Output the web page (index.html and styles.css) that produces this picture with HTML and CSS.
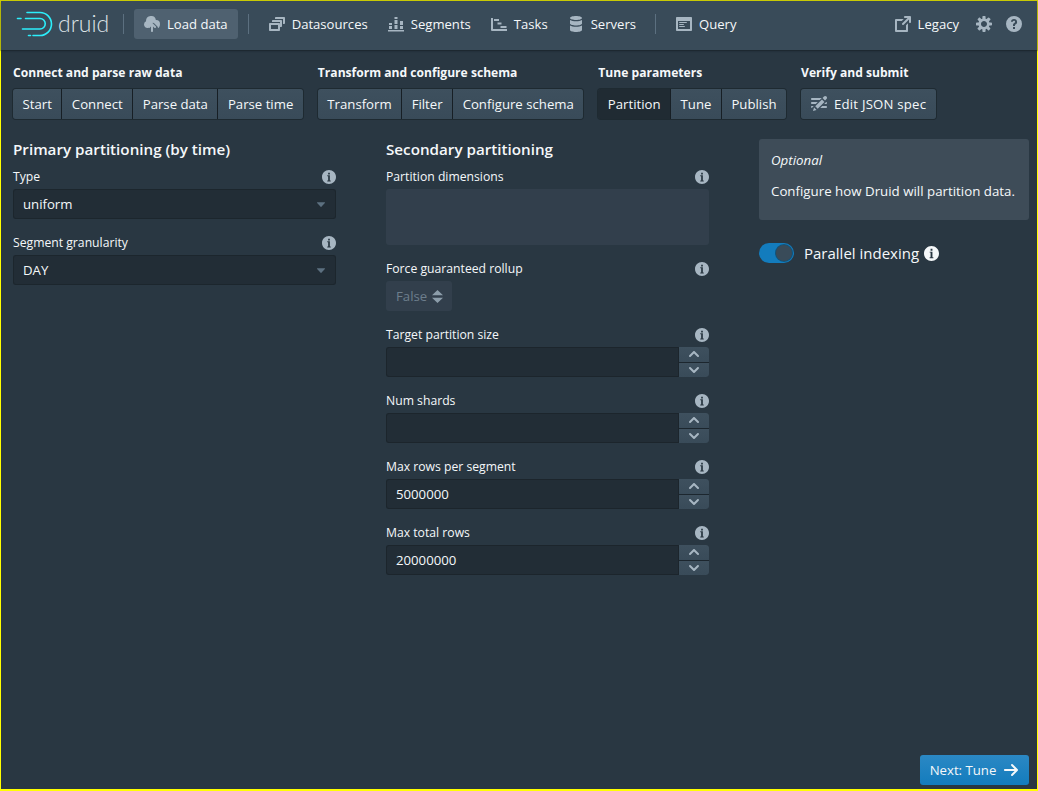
FILE: index.html
```html
<!DOCTYPE html>
<html lang="en">
<head>
<meta charset="utf-8">
<title>Druid</title>
<link rel="stylesheet" href="styles.css">
</head>
<body>
<svg class="defs" width="0" height="0" aria-hidden="true">
  <symbol id="i-info" viewBox="0 0 16 16"><path fill-rule="evenodd" d="M8 0C3.58 0 0 3.58 0 8s3.58 8 8 8 8-3.58 8-8-3.58-8-8-8zM7 3h2v2H7V3zm3 10H6v-1h1V7H6V6h3v6h1v1z"/></symbol>
  <symbol id="i-up" viewBox="0 0 16 16"><path d="M12.71 9.29l-4-4C8.53 5.11 8.28 5 8 5s-.53.11-.71.29l-4 4a1.003 1.003 0 001.42 1.42L8 7.41l3.29 3.29c.18.19.43.3.71.3a1.003 1.003 0 00.71-1.71z"/></symbol>
  <symbol id="i-down" viewBox="0 0 16 16"><path d="M12 5c-.28 0-.53.11-.71.29L8 8.59 4.71 5.29A1.003 1.003 0 003.29 6.71l4 4c.18.18.43.29.71.29s.53-.11.71-.29l4-4A1.003 1.003 0 0012 5z"/></symbol>
  <symbol id="i-caret" viewBox="0 0 16 16"><path d="M3.3 5.5h9.4c.5 0 .8.6.5 1l-4.7 5.2c-.3.3-.7.3-1 0L2.8 6.5c-.3-.4 0-1 .5-1z"/></symbol>
</svg>
<div class="app">
  <header class="nav">
    <div class="logo">
      <svg class="logo-mark" width="38" height="26" viewBox="0 0 38 26" fill="none" stroke="#2ceefb" stroke-width="1.6" stroke-linecap="round">
        <path d="M11 1.5H24a11.500 11.500 0 0 1 0 23H17"/>
        <path d="M1.500 7.500h3.500"/>
        <path d="M9.500 7.500H24a5.250 5.250 0 0 1 0 10.500H6.500"/>
        <path d="M12.500 24.500h2"/>
      </svg>
      <span class="logo-text">druid</span>
    </div>
    <span class="divider"></span>
    <a class="nav-btn active">
      <svg class="nav-icon" viewBox="0 0 16 16"><path d="M8.710 7.290C8.530 7.110 8.280 7 8 7s-.53.110-.71.290l-3 3a1.003 1.003 0 001.420 1.420L7 10.410V15c0 .55.45 1 1 1s1-.45 1-1v-4.590l1.290 1.290c.18.190.43.300.71.300a1.003 1.003 0 00.71-1.710l-3-3zM12 4c-.03 0-.07 0-.1.010A5 5 0 002 5c0 .11.01.22.02.33A3.510 3.510 0 000 8.500C0 10.430 1.570 12 3.500 12H4c0-.55.22-1.050.59-1.410l3-3a1.986 1.986 0 012.830 0l3 3c.36.36.58.860.58 1.410 1.100 0 2-1.800 2-4a4 4 0 00-4-4z"/></svg>
      Load data</a>
    <span class="divider"></span>
    <a class="nav-btn">
      <svg class="nav-icon" viewBox="0 0 16 16"><path fill-rule="evenodd" d="M12 3.980H4c-.55 0-1 .45-1 1v1h8v5h1c.55 0 1-.45 1-1v-5c0-.55-.45-1-1-1zm3-3H7c-.55 0-1 .45-1 1v1h8v5h1c.55 0 1-.45 1-1v-5c0-.55-.45-1-1-1zm-5 6H1c-.55 0-1 .45-1 1v6c0 .55.45 1 1 1h9c.55 0 1-.45 1-1v-6c0-.55-.45-1-1-1zm-1 6H2v-4h7v4z"/></svg>
      Datasources</a>
    <a class="nav-btn">
      <svg class="nav-icon" viewBox="0 0 16 16"><path d="M0 14h16v1.500H0zM1 10h3v3H1zM1 7h3v2H1zM6.500 9h3v4h-3zM6.500 4h3v4h-3zM6.500 1h3v2h-3zM12 10h3v3h-3zM12 5h3v4h-3z"/></svg>
      Segments</a>
    <a class="nav-btn">
      <svg class="nav-icon" viewBox="0 0 16 16"><path d="M0 2h2v11h14v2H1a1 1 0 0 1-1-1zM3 3h5v2H3zM6.500 6.500h4v2h-4zM9.500 10h6v2h-6z"/></svg>
      Tasks</a>
    <a class="nav-btn">
      <svg class="nav-icon" viewBox="0 0 16 16"><path d="M8 4c3.310 0 6-.9 6-2s-2.690-2-6-2-6 .9-6 2 2.690 2 6 2zM2 3.900V7.500c0 1.100 2.690 2 6 2s6-.9 6-2V3.900C12.600 4.800 10.450 5.300 8 5.300S3.400 4.800 2 3.900zM2 9.400V14c0 1.100 2.690 2 6 2s6-.9 6-2V9.400c-1.400.9-3.550 1.400-6 1.400s-4.600-.5-6-1.400z"/></svg>
      Servers</a>
    <span class="divider divider-wide"></span>
    <a class="nav-btn">
      <svg class="nav-icon" viewBox="0 0 16 16"><path fill-rule="evenodd" d="M3.500 7h7c.28 0 .5-.22.5-.5s-.22-.5-.5-.5h-7c-.28 0-.5.22-.5.5s.22.5.5.5zM15 1H1c-.55 0-1 .45-1 1v12c0 .55.45 1 1 1h14c.55 0 1-.45 1-1V2c0-.55-.45-1-1-1zm-1 12H2V5h12v8zM3.500 9h4c.28 0 .5-.22.5-.5S7.780 8 7.500 8h-4c-.28 0-.5.22-.5.5s.22.5.5.5zm0 2h5c.28 0 .5-.22.5-.5s-.22-.5-.5-.5h-5c-.28 0-.5.22-.5.5s.22.5.5.5z"/></svg>
      Query</a>
    <span class="nav-spacer"></span>
    <a class="nav-btn">
      <svg class="nav-icon" viewBox="0 0 16 16"><path d="M10.990 13.990h-9v-9h4.760l2-2H.99c-.55 0-1 .45-1 1v11c0 .55.45 1 1 1h11c.55 0 1-.45 1-1V7.240l-2 2v4.750zm4-14h-5c-.55 0-1 .45-1 1s.45 1 1 1h2.590L7.290 7.280a1.003 1.003 0 001.420 1.420l5.290-5.290v2.590c0 .55.45 1 1 1s1-.45 1-1v-5c0-.56-.45-1.010-1-1.010z"/></svg>
      Legacy</a>
    <a class="nav-btn icon-only">
      <svg class="nav-icon" viewBox="0 0 16 16"><path fill-rule="evenodd" d="M15.190 6.390h-1.850c-.11-.37-.27-.71-.45-1.040l1.360-1.360c.31-.31.31-.82 0-1.130l-1.130-1.130a.803.803 0 00-1.130 0l-1.360 1.360c-.33-.17-.67-.33-1.040-.44V.79c0-.44-.36-.8-.8-.8h-1.600c-.44 0-.8.36-.8.8v1.860c-.39.12-.75.28-1.100.47l-1.300-1.300c-.3-.3-.79-.3-1.090 0L1.820 2.910c-.3.3-.3.79 0 1.090l1.300 1.300c-.2.34-.36.7-.48 1.090H.79c-.44 0-.8.36-.8.8v1.600c0 .44.36.8.8.8h1.850c.11.37.27.71.45 1.040l-1.360 1.360c-.31.31-.31.82 0 1.130l1.130 1.130c.31.31.82.31 1.130 0l1.360-1.360c.33.18.67.33 1.040.44v1.860c0 .44.36.8.8.8h1.600c.44 0 .8-.36.8-.8v-1.860c.39-.12.75-.28 1.100-.47l1.300 1.300c.3.3.79.3 1.090 0l1.090-1.090c.3-.3.3-.79 0-1.090l-1.300-1.300c.19-.35.36-.71.48-1.100h1.850c.44 0 .8-.36.8-.8v-1.600a.816.816 0 00-.81-.79zm-7.200 4.600c-1.660 0-3-1.340-3-3s1.340-3 3-3 3 1.340 3 3-1.340 3-3 3z"/></svg>
    </a>
    <a class="nav-btn icon-only">
      <svg class="nav-icon" viewBox="0 0 16 16"><path fill-rule="evenodd" d="M8 0a8 8 0 1 0 0 16A8 8 0 0 0 8 0zM7 11h2v2H7zM8 3c-1.800 0-3 1.100-3.100 2.800h1.900C6.900 5.200 7.300 4.800 8 4.800c.7 0 1.100.4 1.100 1 0 .5-.3.8-.9 1.200C7.300 7.600 7 8.200 7 9.100V10h2v-.7c0-.4.2-.6.800-1 .8-.6 1.300-1.300 1.300-2.400C11.100 4.100 9.800 3 8 3z"/></svg>
    </a>
  </header>

  <nav class="steps">
    <div class="step-group">
      <div class="step-title">Connect and parse raw data</div>
      <div class="btn-group">
        <button class="step">Start</button><button class="step">Connect</button><button class="step">Parse data</button><button class="step">Parse time</button>
      </div>
    </div>
    <div class="step-group">
      <div class="step-title">Transform and configure schema</div>
      <div class="btn-group">
        <button class="step">Transform</button><button class="step">Filter</button><button class="step">Configure schema</button>
      </div>
    </div>
    <div class="step-group">
      <div class="step-title">Tune parameters</div>
      <div class="btn-group">
        <button class="step current">Partition</button><button class="step">Tune</button><button class="step">Publish</button>
      </div>
    </div>
    <div class="step-group">
      <div class="step-title">Verify and submit</div>
      <div class="btn-group">
        <button class="step with-icon">
          <svg class="step-icon" viewBox="0 0 16 16"><path d="M1 8h3.760l2-2H1c-.55 0-1 .45-1 1s.45 1 1 1zm14.490-4.990c.31-.32.51-.76.51-1.240C16 .79 15.210 0 14.230 0c-.48 0-.92.2-1.240.51l-1.440 1.440 2.470 2.470 1.470-1.410zM1 4h7.760l2-2H1c-.55 0-1 .45-1 1s.45 1 1 1zm0 6c-.55 0-1 .45-1 1 0 .48.35.86.8.96L2.760 10H1zm9.950-6.430l-6.690 6.690 2.470 2.470 6.690-6.690-2.470-2.470zm4.250 2.470L13.240 8H15c.55 0 1-.45 1-1 0-.48-.35-.86-.8-.96zM2 15l3.530-1.060-2.470-2.470L2 15zm13-5h-3.760l-2 2H15c.55 0 1-.45 1-1s-.45-1-1-1z"/></svg>
          Edit JSON spec</button>
      </div>
    </div>
  </nav>

  <main class="content">
    <section class="col col-main">
      <h2 class="col-title">Primary partitioning (by time)</h2>
      <div class="field">
        <div class="field-label">Type<svg class="info"><use href="#i-info"/></svg></div>
        <div class="select">uniform<svg class="caret"><use href="#i-caret"/></svg></div>
      </div>
      <div class="field">
        <div class="field-label">Segment granularity<svg class="info"><use href="#i-info"/></svg></div>
        <div class="select">DAY<svg class="caret"><use href="#i-caret"/></svg></div>
      </div>
    </section>

    <section class="col col-main">
      <h2 class="col-title">Secondary partitioning</h2>
      <div class="field">
        <div class="field-label">Partition dimensions<svg class="info"><use href="#i-info"/></svg></div>
        <div class="textarea-disabled"></div>
      </div>
      <div class="field">
        <div class="field-label">Force guaranteed rollup<svg class="info"><use href="#i-info"/></svg></div>
        <div class="bool-disabled">False
          <svg class="double-caret" viewBox="0 0 11 13"><path d="M5.500 0L11 5.200H0zM0 7.800h11L5.500 13z"/></svg>
        </div>
      </div>
      <div class="field">
        <div class="field-label">Target partition size<svg class="info"><use href="#i-info"/></svg></div>
        <div class="num"><div class="num-value"></div><div class="stepper"><span class="stepper-btn"><svg class="chev"><use href="#i-up"/></svg></span><span class="stepper-btn"><svg class="chev"><use href="#i-down"/></svg></span></div></div>
      </div>
      <div class="field">
        <div class="field-label">Num shards<svg class="info"><use href="#i-info"/></svg></div>
        <div class="num"><div class="num-value"></div><div class="stepper"><span class="stepper-btn"><svg class="chev"><use href="#i-up"/></svg></span><span class="stepper-btn"><svg class="chev"><use href="#i-down"/></svg></span></div></div>
      </div>
      <div class="field">
        <div class="field-label">Max rows per segment<svg class="info"><use href="#i-info"/></svg></div>
        <div class="num"><div class="num-value">5000000</div><div class="stepper"><span class="stepper-btn"><svg class="chev"><use href="#i-up"/></svg></span><span class="stepper-btn"><svg class="chev"><use href="#i-down"/></svg></span></div></div>
      </div>
      <div class="field">
        <div class="field-label">Max total rows<svg class="info"><use href="#i-info"/></svg></div>
        <div class="num"><div class="num-value">20000000</div><div class="stepper"><span class="stepper-btn"><svg class="chev"><use href="#i-up"/></svg></span><span class="stepper-btn"><svg class="chev"><use href="#i-down"/></svg></span></div></div>
      </div>
    </section>

    <aside class="col col-side">
      <div class="callout">
        <p class="callout-em">Optional</p>
        <p class="callout-text">Configure how Druid will partition data.</p>
      </div>
      <div class="switch-row">
        <span class="switch"><span class="knob"></span></span>
        <span class="switch-label">Parallel indexing</span>
        <svg class="info info-white"><use href="#i-info"/></svg>
      </div>
    </aside>
  </main>

  <footer class="controls">
    <button class="next">Next: Tune
      <svg class="next-icon" viewBox="0 0 16 16"><path d="M14.700 7.290l-5-5a.965.965 0 00-.71-.3 1.003 1.003 0 00-.71 1.710l3.290 3.290H1.990c-.55 0-1 .45-1 1s.45 1 1 1h9.590l-3.290 3.290a1.003 1.003 0 001.420 1.420l5-5c.18-.18.29-.43.29-.71s-.12-.52-.3-.7z"/></svg>
    </button>
  </footer>
</div>
</body>
</html>
```

FILE: styles.css
```css
* { box-sizing: border-box; }
html, body { margin: 0; height: 100%; }
body {
  background: #293742;
  color: #f5f8fa;
  font-family: "Open Sans", "Noto Sans", sans-serif;
  font-size: 13.2px;
  overflow: hidden;
}
.defs { position: absolute; }
.app {
  height: 791px;
  border: 1px solid #ffff00;
  border-bottom-width: 2px;
  display: flex;
  flex-direction: column;
}

/* top bar */
.nav {
  height: 49px;
  flex: none;
  display: flex;
  align-items: center;
  padding: 0 8px 3px 15px;
  background: #394b59;
  box-shadow: 0 0 0 1px rgba(16,22,26,.2), 0 1px 2px rgba(16,22,26,.4);
  position: relative;
}
.logo { display: flex; align-items: center; width: 94px; margin-right: 3px; }
.logo-mark { flex: none; }
.logo-text {
  font-family: "Lato", sans-serif;
  font-weight: 300;
  font-size: 23px;
  color: #dde3e7;
  margin-left: 4px;
  line-height: 1;
  position: relative;
  top: -1px;
}
.divider { width: 1px; height: 20px; background: #5c7080; margin: 0 10px; flex: none; }
.divider-wide { margin: 0 10px 0 9px; }
.nav-btn {
  display: flex;
  align-items: center;
  height: 30px;
  padding: 0 10px;
  gap: 7px;
  border-radius: 3px;
  color: #f5f8fa;
  font-size: 13.1px;
  flex: none;
}
.nav-btn.active { background: #4f6170; }
.nav-btn.icon-only { padding: 0 7px; }
.nav-icon { width: 16px; height: 16px; fill: #a7b6c2; flex: none; }
.nav-spacer { flex: 1; }

/* wizard steps */
.steps {
  flex: none;
  display: flex;
  gap: 15px;
  padding: 14px 0 0 12px;
}
.step-title { font-weight: 700; font-size: 12.1px; line-height: 18px; margin-bottom: 7px; }
.btn-group {
  display: flex;
  width: fit-content;
  border-radius: 3px;
  box-shadow: 0 0 0 1px rgba(16,22,26,.4);
}
.step {
  height: 30px;
  padding: 0 9.5px;
  border: 0;
  background: linear-gradient(#3e505e, #394b59);
  color: #f5f8fa;
  font: inherit;
  display: flex;
  align-items: center;
  gap: 7px;
  box-shadow: 1px 0 0 rgba(16,22,26,.7);
  margin-right: 1px;
}
.step:first-child { border-radius: 3px 0 0 3px; }
.step:last-child { border-radius: 0 3px 3px 0; margin-right: 0; box-shadow: none; }
.step:only-child { border-radius: 3px; }
.step.current { background: #202b33; }
.step.with-icon { padding: 0 10px; letter-spacing: .2px; }
.step-icon { width: 16px; height: 16px; fill: #a7b6c2; flex: none; }

/* columns */
.content {
  flex: 1;
  min-height: 0;
  display: grid;
  grid-template-columns: 323px 323px 270px;
  column-gap: 50px;
  padding: 20px 8px 0 12px;
  align-items: start;
}
.col-title { margin: 0 0 8px; font-size: 15.2px; font-weight: 600; line-height: 20px; }
.field { margin-bottom: 14px; }
.field-label {
  display: flex;
  justify-content: space-between;
  align-items: center;
  height: 18px;
  margin-bottom: 4px;
  font-size: 12.2px;
}
.field-label .info { margin-top: 2px; }
.info { width: 14px; height: 14px; fill: #a7b6c2; flex: none; }
.info-white { fill: #f5f8fa; width: 15px; height: 15px; }
.select {
  height: 30px;
  display: flex;
  align-items: center;
  justify-content: space-between;
  padding: 0 9px 0 10px;
  background: #222d36;
  border-radius: 3px;
  box-shadow: inset 0 0 0 1px rgba(16,22,26,.3);
}
.caret { width: 12px; height: 12px; fill: #5c7080; flex: none; }
.textarea-disabled {
  height: 56px;
  background: #323f4c;
  border-radius: 3px;
}
.bool-disabled {
  width: 66px;
  height: 30px;
  display: flex;
  align-items: center;
  gap: 5px;
  padding-left: 10px;
  background: #323f4c;
  border-radius: 3px;
  color: #6d7e8c;
}
.double-caret { width: 11px; height: 13px; fill: #8c9daa; flex: none; }
.num { display: flex; height: 30px; }
.num-value {
  flex: 1;
  display: flex;
  align-items: center;
  padding-left: 10px;
  background: #222d36;
  border-radius: 3px 0 0 3px;
  box-shadow: inset 0 0 0 1px rgba(16,22,26,.35);
}
.stepper { width: 30px; display: flex; flex-direction: column; gap: 1px; background: #1c262e; border-radius: 0 3px 3px 0; overflow: hidden; }
.stepper-btn {
  flex: 1 1 0;
  min-height: 0;
  display: flex;
  align-items: center;
  justify-content: center;
  background: linear-gradient(#3e505e, #394b59);
}
.chev { width: 16px; height: 16px; fill: #a7b6c2; flex: none; }

/* side column */
.callout {
  background: #3e4c58;
  border-radius: 3px;
  padding: 12px;
  height: 81px;
}
.callout p { margin: 0; line-height: 18px; font-size: 13.3px; }
.callout .callout-em { font-style: italic; margin-bottom: 13px; }
.switch-row {
  display: flex;
  align-items: center;
  height: 20px;
  margin-top: 23px;
}
.switch {
  width: 35px;
  height: 20px;
  border-radius: 10px;
  background: #137cbd;
  display: flex;
  justify-content: flex-end;
  align-items: center;
  padding-right: 2px;
  flex: none;
}
.knob { width: 16px; height: 16px; border-radius: 50%; background: #394b59; box-shadow: 0 0 0 1px rgba(16,22,26,.4); }
.switch-label { margin: 0 5px 0 10px; font-size: 15px; }

/* footer */
.controls {
  flex: none;
  display: flex;
  justify-content: flex-end;
  padding: 0 8px 4px 0;
}
.next {
  height: 30px;
  width: 109px;
  border: 0;
  border-radius: 3px;
  background: linear-gradient(#2b88c4, #137cbd);
  color: #f5f8fa;
  font: inherit;
  display: flex;
  align-items: center;
  justify-content: center;
  gap: 7px;
}
.next-icon { width: 16px; height: 16px; fill: #f5f8fa; flex: none; }
```
